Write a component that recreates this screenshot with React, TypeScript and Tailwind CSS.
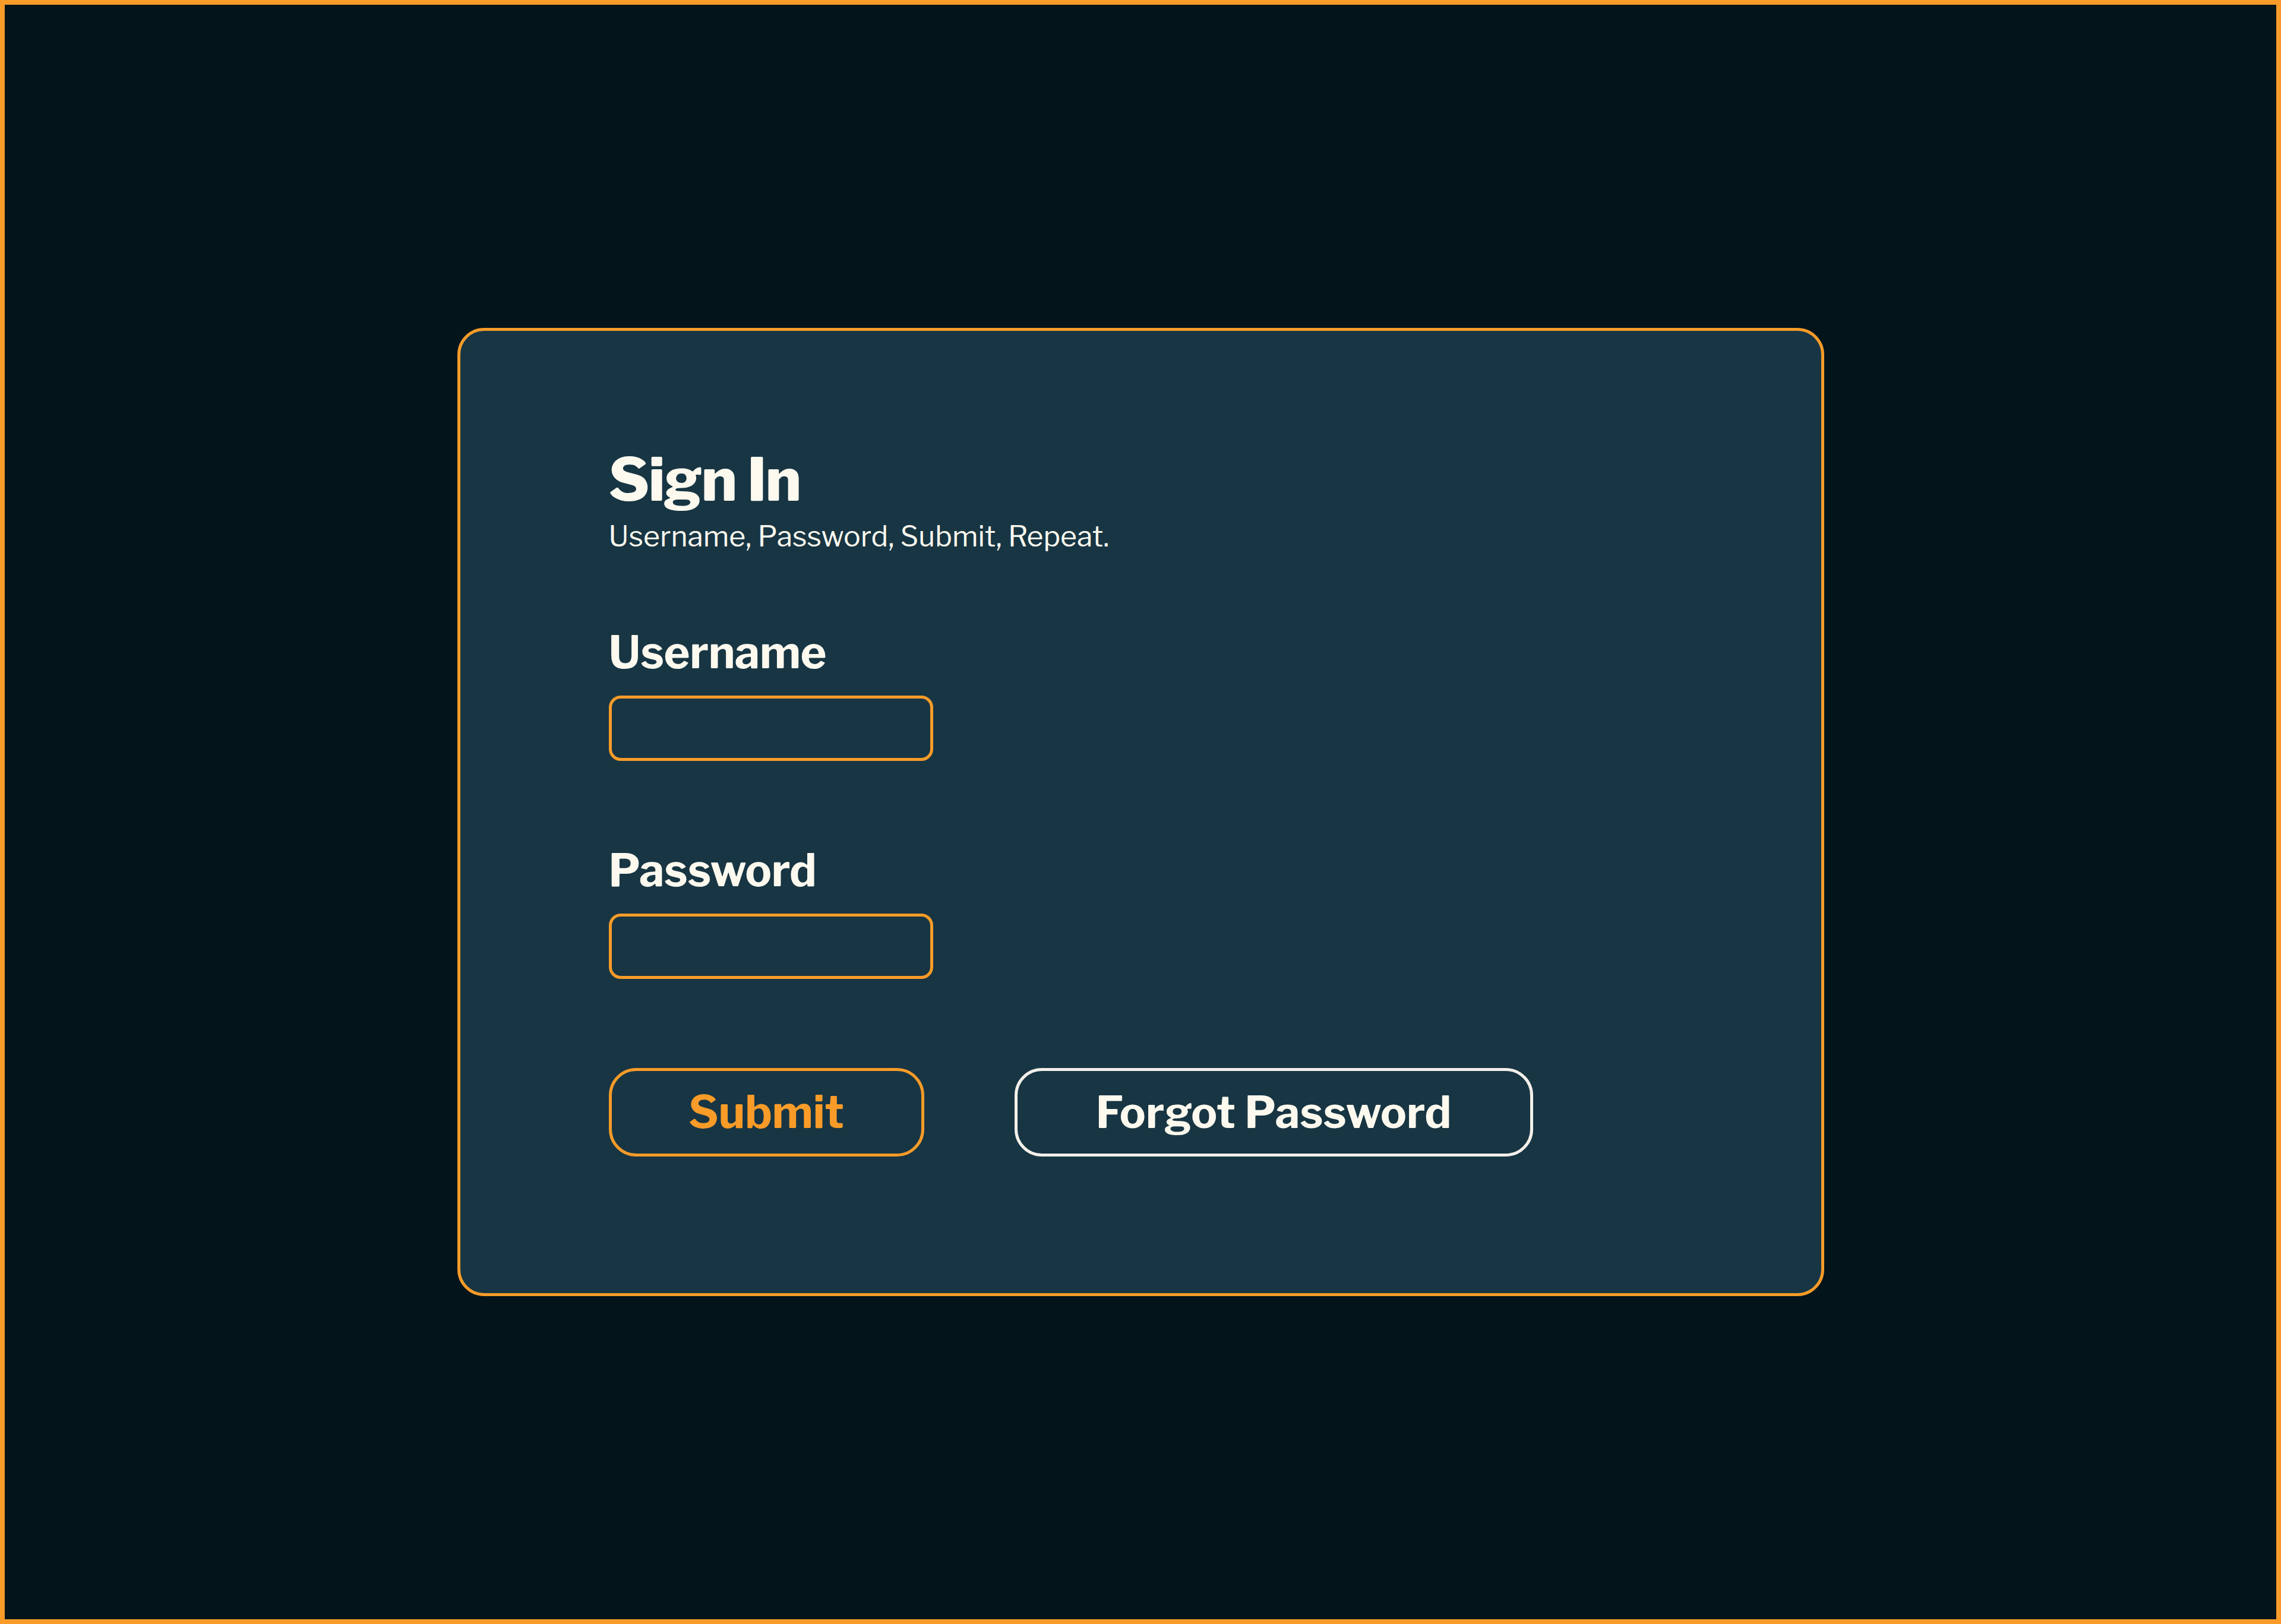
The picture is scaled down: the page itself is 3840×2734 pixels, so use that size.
import { useState } from "react"

const font = { fontFamily: '"Libre Franklin", Inter, "Noto Sans", sans-serif' }

function Field({ label, type, className }: { label: string; type: string; className?: string }) {
  const [value, setValue] = useState("")
  return (
    <label className={`flex flex-col ${className ?? ""}`}>
      <span className="text-[75px] font-bold leading-none tracking-[-0.005em] text-[#fdf9ef]">{label}</span>
      <input
        type={type}
        value={value}
        onChange={(e) => setValue(e.target.value)}
        className="mt-[35px] h-[110px] w-[546px] rounded-[20px] border-[5px] border-[#f89b29] bg-transparent px-6 text-[48px] text-[#fdf9ef] outline-none"
      />
    </label>
  )
}

export default function App() {
  return (
    <div
      style={font}
      className="flex min-h-screen items-center justify-center border-8 border-[#f89b29] bg-[#03151b]"
    >
      <div className="w-[2301px] rounded-[45px] border-[5px] border-[#f89b29] bg-[#173543] pb-[230px] pl-[250px] pt-[200px]">
        <h1 className="text-[100px] font-extrabold leading-none tracking-[-0.015em] text-[#fdf9ef]">Sign In</h1>
        <p className="mt-[22px] text-[48px] leading-none text-[#fdf9ef]">Username, Password, Submit, Repeat.</p>

        <form className="flex flex-col" onSubmit={(e) => e.preventDefault()}>
          <Field label="Username" type="text" className="mt-[134px]" />
          <Field label="Password" type="password" className="mt-[147px]" />

          <div className="mt-[150px] flex gap-[152px]">
            <button
              type="submit"
              className="flex h-[149px] w-[531px] items-center justify-center rounded-[46px] border-[5px] border-[#f89b29] text-[75px] font-bold leading-none text-[#f89b29]"
            >
              Submit
            </button>
            <button
              type="button"
              className="flex h-[149px] w-[873px] items-center justify-center rounded-[46px] border-[5px] border-[#f3f0ea] text-[74px] font-bold leading-none text-[#fdf9ef]"
            >
              Forgot Password
            </button>
          </div>
        </form>
      </div>
    </div>
  )
}
